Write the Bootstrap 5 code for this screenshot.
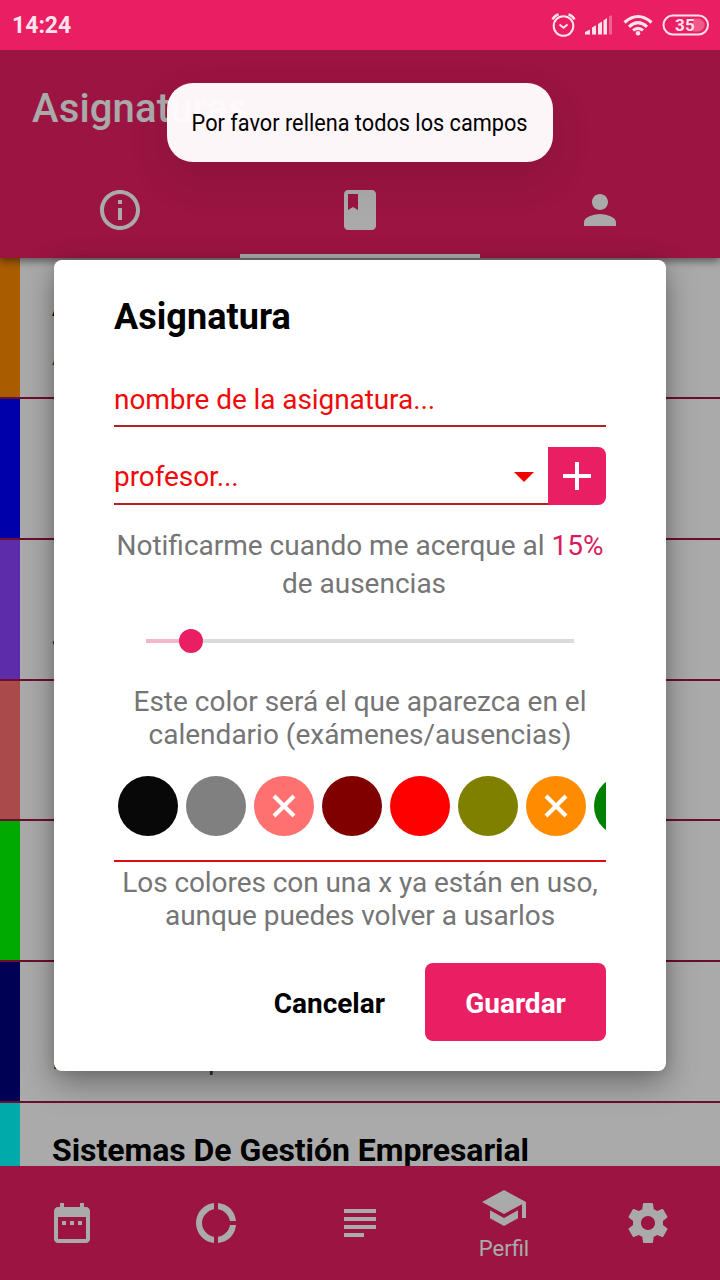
<!DOCTYPE html>
<html lang="es">
<head>
<meta charset="utf-8">
<meta name="viewport" content="width=device-width, initial-scale=1">
<title>Asignaturas</title>
<link href="https://cdn.jsdelivr.net/npm/bootstrap@5.3.0/dist/css/bootstrap.min.css" rel="stylesheet">
<style>
:root{--pink:#e91e63}
body{font-family:Roboto,"Liberation Sans",sans-serif;color:#000;width:720px;height:1280px;overflow:hidden;background:#fff}
.bg-pink{background:var(--pink)}
.statusbar{height:50px;padding:1px 12px 0 12px;color:#ffe3ec;z-index:5}
.clock{font-size:23px;font-weight:700;line-height:50px}
.app-head{height:208px;box-shadow:0 3px 8px rgba(0,0,0,.5);z-index:1}
.app-title{height:112px;padding:5px 0 0 32px;font-size:40px;line-height:108px;font-weight:500;color:#fff;letter-spacing:.15px}
.tab-item{height:96px;border-bottom:4px solid transparent;padding-top:4px}
.tab-item.current{border-color:#fff}
.ico{width:48px;height:48px;fill:#fff;display:block}
.subjects{height:908px}
.subject{height:141px;flex:none;border-bottom:2px solid #a31646}
.subject.short{height:140px}
.stripe{width:20px;flex:none}
.subject-text{padding:26px 0 0 32px}
.subject-name{font-size:32px;font-weight:700;line-height:42px;letter-spacing:-.05px}
.subject-teacher{font-size:28px;line-height:40px;margin-top:10px;color:#444}
.bottombar{height:114px;z-index:1}
.bottombar .label{font-size:22px;line-height:28px;color:#fff;padding-top:3px}
.school{margin-top:18px}
.dim{inset:50px 0 0 0;background:rgba(0,0,0,.3333);z-index:3;padding-top:210px}
.dialog-box{width:612px;height:811px;border-radius:8px;background:#fff;padding:0 60px;box-shadow:0 12px 32px rgba(0,0,0,.36),0 0 12px rgba(0,0,0,.12)}
.dialog-title{font-size:36px;font-weight:700;line-height:44px;margin-top:35px;letter-spacing:.05px}
.field{font-size:28px;line-height:34px;color:#f00a0a;border-bottom:2px solid #b52020;letter-spacing:-.08px}
.field-name{margin-top:38px;height:50px;padding-top:6px}
.teacher-row{margin-top:20px}
.field-teacher{height:58px;padding:3px 14px 0 0}
.add-btn{width:58px;height:58px;border-radius:0 8px 8px 0}
.hint{font-size:28px;color:#757575;text-align:center;white-space:nowrap}
.hint-percent{line-height:38px;margin-top:22px}
.hint-percent .second{padding-left:8px}
.hint-color{line-height:33px;margin-top:32px}
.hint-used{line-height:33px;margin-top:4px;letter-spacing:-.07px}
.rule{height:2px;margin-top:24px;background:#de0d14}
.accent{color:#d81b60}
.slider-row{height:24px;padding:0 32px;margin-top:26px}
.track{height:4px;background:#dadada;flex:1}
.track-on{height:4px;width:33px;background:#f4b6cb}
.thumb{width:24px;height:24px;border-radius:50%}
.swatches{height:60px;gap:8px;padding-left:4px;margin-top:25px}
.swatch{width:60px;height:60px;border-radius:50%;flex:none}
.swatch svg{width:24px;height:24px;stroke:#fff;stroke-width:4.2;fill:none}
.actions{gap:40px;margin-top:31px}
.action{font-size:28px;font-weight:700;height:78px;line-height:81px}
.save{width:181px;border-radius:8px;color:#fff}
.toast-pill{top:83px;left:167px;width:386px;height:79px;border-radius:26px;background:rgba(255,252,253,.975);box-shadow:0 16px 44px rgba(0,0,0,.11);z-index:6}
.toast-pill span{font-size:24.500px;white-space:nowrap;transform:scaleX(.886);display:block;line-height:80px}
</style>
</head>
<body class="position-relative d-flex flex-column">
<div class="statusbar bg-pink d-flex justify-content-between position-relative">
  <div class="clock">14:24</div>
  <svg width="159" height="48" viewBox="550 1 159 48" fill="#ffe3ec" style="margin-right:-1px">
    <g fill="none" stroke="#ffe3ec" stroke-width="2">
      <circle cx="563.5" cy="26" r="9.8"/>
      <path d="M559.5 24.5l4 3.3 4-3.3" stroke-width="2"/>
      <path d="M552.5 19.5q2-4 6-5M574.5 19.5q-2-4-6-5" stroke-width="2.4"/>
    </g>
    <path d="M585 34.500V32L590 29.500V34.500zM592 34.500V27.500L596 25.300V34.500zM598 34.500V24L602 21.500V34.500zM603.500 34.500V20.500L607 18V34.500z"/>
    <path d="M609 34.500V16.500L612 15V34.500z" opacity=".35"/>
    <g fill="none" stroke="#ffe3ec" stroke-width="3.100">
      <path d="M624.500 22.500Q638 10.500 651.500 22.500M629 26.800Q638 18.500 647 26.800M633 30.400Q638 26.200 643 30.400"/>
    </g>
    <circle cx="638" cy="33.200" r="2.300"/>
    <path d="M693 18.500h5a6.500 6.500 0 0 1 0 13h-5z" opacity=".3"/>
    <rect x="663.500" y="15.500" width="44.500" height="19" rx="9.500" fill="none" stroke="#ffe3ec" stroke-width="2"/>
    <text x="675" y="31" font-size="17" font-weight="700" font-family="Roboto, sans-serif" letter-spacing=".3">35</text>
  </svg>
</div>

<header class="app-head bg-pink position-relative">
  <div class="app-title">Asignaturas</div>
  <div class="row g-0">
    <div class="col tab-item d-flex align-items-center justify-content-center"><svg class="ico" viewBox="0 0 24 24"><path d="M11 7h2v2h-2zm0 4h2v6h-2zm1-9C6.480 2 2 6.480 2 12s4.480 10 10 10 10-4.480 10-10S17.520 2 12 2zm0 18c-4.410 0-8-3.590-8-8s3.590-8 8-8 8 3.590 8 8-3.590 8-8 8z"/></svg></div>
    <div class="col tab-item current d-flex align-items-center justify-content-center"><svg class="ico" viewBox="0 0 24 24"><path d="M18 2H6c-1.100 0-2 .9-2 2v16c0 1.100.9 2 2 2h12c1.100 0 2-.9 2-2V4c0-1.100-.9-2-2-2zM6 4h5v8l-2.500-1.500L6 12V4z"/></svg></div>
    <div class="col tab-item d-flex align-items-center justify-content-center"><svg class="ico" viewBox="0 0 24 24"><path d="M12 12c2.210 0 4-1.790 4-4s-1.790-4-4-4-4 1.790-4 4 1.790 4 4 4zm0 2c-2.670 0-8 1.340-8 4v2h16v-2c0-2.660-5.330-4-8-4z"/></svg></div>
  </div>
</header>

<main class="subjects d-flex flex-column overflow-hidden">
  <div class="subject d-flex"><div class="stripe" style="background:#ff8c00"></div><div class="subject-text"><div class="subject-name">A</div><div class="subject-teacher">A</div></div></div>
  <div class="subject d-flex"><div class="stripe" style="background:#0000ff"></div></div>
  <div class="subject d-flex"><div class="stripe" style="background:#8a43ff"></div><div class="subject-text"><div class="subject-name">&nbsp;</div><div class="subject-teacher">J</div></div></div>
  <div class="subject short d-flex"><div class="stripe" style="background:#ff7070"></div></div>
  <div class="subject d-flex"><div class="stripe" style="background:#00ff00"></div></div>
  <div class="subject d-flex"><div class="stripe" style="background:#000080"></div><div class="subject-text"><div class="subject-name">&nbsp;</div><div class="subject-teacher">Manuel Enrique</div></div></div>
  <div class="subject d-flex"><div class="stripe" style="background:#00ffff"></div><div class="subject-text"><div class="subject-name">Sistemas De Gestión Empresarial</div></div></div>
</main>

<nav class="bottombar bg-pink row g-0 position-relative">
  <div class="col d-flex align-items-center justify-content-center"><svg class="ico" viewBox="0 0 24 24"><path d="M9 11H7v2h2v-2zm4 0h-2v2h2v-2zm4 0h-2v2h2v-2zm2-7h-1V2h-2v2H8V2H6v2H5c-1.110 0-1.990.9-1.990 2L3 20c0 1.100.89 2 2 2h14c1.100 0 2-.9 2-2V6c0-1.100-.9-2-2-2zm0 16H5V9h14v11z"/></svg></div>
  <div class="col d-flex align-items-center justify-content-center"><svg class="ico" viewBox="0 0 24 24"><path d="M11 5.080V2c-5 .5-9 4.810-9 10s4 9.500 9 10v-3.080c-3-.48-6-3.400-6-6.920s3-6.440 6-6.920zM18.970 11H22c-.47-5-4-8.530-9-9v3.080c3 .43 5.540 2.920 5.970 5.920zM13 18.920V22c5-.47 8.530-4 9-9h-3.030c-.43 3-2.970 5.490-5.970 5.920z"/></svg></div>
  <div class="col d-flex align-items-center justify-content-center"><svg class="ico" viewBox="0 0 24 24"><path d="M14 17H4v2h10v-2zm6-8H4v2h16V9zM4 15h16v-2H4v2zM4 5v2h16V5H4z"/></svg></div>
  <div class="col d-flex flex-column align-items-center"><svg class="ico school flex-shrink-0" viewBox="0 0 24 24"><path d="M5 13.180v4L12 21l7-3.820v-4L12 17l-7-3.820zM12 3L1 9l11 6 9-4.910V17h2V9L12 3z"/></svg><div class="label">Perfil</div></div>
  <div class="col d-flex align-items-center justify-content-center"><svg class="ico" viewBox="0 0 24 24"><path d="M19.430 12.980c.04-.32.07-.64.07-.98s-.03-.66-.07-.98l2.110-1.650c.19-.15.24-.42.12-.64l-2-3.460c-.12-.22-.39-.3-.61-.22l-2.490 1c-.52-.4-1.080-.73-1.690-.98l-.38-2.650C14.460 2.180 14.250 2 14 2h-4c-.25 0-.46.18-.49.42l-.38 2.650c-.61.25-1.170.59-1.690.98l-2.490-1c-.23-.09-.49 0-.61.22l-2 3.460c-.13.22-.07.49.12.64l2.110 1.650c-.04.32-.07.65-.07.98s.03.66.07.98l-2.110 1.650c-.19.15-.24.42-.12.64l2 3.460c.12.22.39.3.61.22l2.490-1c.52.4 1.080.73 1.690.98l.38 2.650c.03.24.24.42.49.42h4c.25 0 .46-.18.49-.42l.38-2.650c.61-.25 1.170-.59 1.690-.98l2.490 1c.23.09.49 0 .61-.22l2-3.460c.12-.22.07-.49-.12-.64l-2.110-1.650zM12 15.500c-1.930 0-3.500-1.570-3.500-3.500s1.570-3.500 3.500-3.500 3.500 1.570 3.500 3.500-1.570 3.500-3.500 3.500z"/></svg></div>
</nav>

<div class="dim position-absolute d-flex justify-content-center align-items-start">
  <section class="dialog-box d-flex flex-column" role="dialog">
    <div class="dialog-title">Asignatura</div>
    <div class="field field-name">nombre de la asignatura...</div>
    <div class="teacher-row d-flex">
      <div class="field field-teacher flex-grow-1 d-flex align-items-center justify-content-between"><span>profesor...</span><svg width="20" height="10" viewBox="0 0 20 10" fill="#f00000"><path d="M0 0h20L10 10z"/></svg></div>
      <div class="add-btn bg-pink d-flex align-items-center justify-content-center"><svg width="28" height="28" viewBox="0 0 28 28"><path d="M14 0v28M0 14h28" stroke="#fff" stroke-width="4"/></svg></div>
    </div>
    <div class="hint hint-percent">Notificarme cuando me acerque al <span class="accent">15%</span><br><span class="second">de ausencias</span></div>
    <div class="slider-row d-flex align-items-center"><div class="track-on"></div><div class="thumb bg-pink"></div><div class="track"></div></div>
    <div class="hint hint-color">Este color será el que aparezca en el<br>calendario (exámenes/ausencias)</div>
    <div class="swatches d-flex overflow-hidden">
      <div class="swatch" style="background:#080808"></div>
      <div class="swatch" style="background:#808080"></div>
      <div class="swatch d-flex align-items-center justify-content-center" style="background:#ff7070"><svg viewBox="0 0 24 24"><path d="M2 2l20 20M22 2L2 22"/></svg></div>
      <div class="swatch" style="background:#800000"></div>
      <div class="swatch" style="background:#ff0000"></div>
      <div class="swatch" style="background:#808000"></div>
      <div class="swatch d-flex align-items-center justify-content-center" style="background:#ff8c00"><svg viewBox="0 0 24 24"><path d="M2 2l20 20M22 2L2 22"/></svg></div>
      <div class="swatch" style="background:#008000"></div>
    </div>
    <div class="rule"></div>
    <div class="hint hint-used">Los colores con una x ya están en uso,<br>aunque puedes volver a usarlos</div>
    <div class="actions d-flex justify-content-end">
      <div class="action">Cancelar</div>
      <div class="action save bg-pink text-center">Guardar</div>
    </div>
  </section>
</div>

<div class="toast-pill position-absolute d-flex justify-content-center"><span>Por favor rellena todos los campos</span></div>
<script src="https://cdn.jsdelivr.net/npm/bootstrap@5.3.0/dist/js/bootstrap.bundle.min.js"></script>
</body>
</html>
